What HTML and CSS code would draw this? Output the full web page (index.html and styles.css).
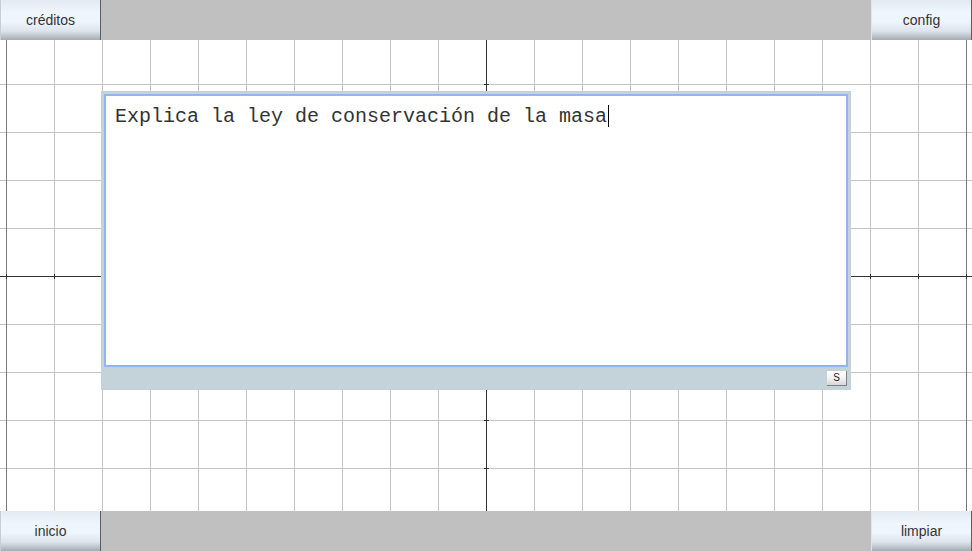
FILE: index.html
```html
<!DOCTYPE html>
<html lang="es">
<head>
<meta charset="utf-8">
<title>Pizarra</title>
<link rel="stylesheet" href="styles.css">
</head>
<body>
<div class="app">
  <header class="bar">
    <button class="btn">créditos</button>
    <div class="fill"></div>
    <button class="btn btn-right">config</button>
  </header>
  <main class="stage">
    <div class="panel">
      <div class="editor">Explica la ley de conservación de la masa<span class="caret"></span></div>
      <div class="panel-foot"><button class="mini">S</button></div>
    </div>
  </main>
  <footer class="bar">
    <button class="btn">inicio</button>
    <div class="fill"></div>
    <button class="btn btn-right">limpiar</button>
  </footer>
</div>
</body>
</html>
```
FILE: styles.css
```css
* { box-sizing: border-box; }
html, body { margin: 0; padding: 0; }
body {
  width: 972px;
  height: 551px;
  overflow: hidden;
  font-family: "Liberation Sans", Arial, sans-serif;
}
.app {
  width: 972px;
  height: 551px;
  display: flex;
  flex-direction: column;
  background-color: #fff;
  background-image:
    linear-gradient(to right, #333 1px, transparent 1px),
    linear-gradient(#333 1px, transparent 1px),
    linear-gradient(#333, #333),
    linear-gradient(#333, #333),
    linear-gradient(#7a7a7a, #7a7a7a),
    linear-gradient(#7a7a7a, #7a7a7a),
    linear-gradient(to right, #c4c4c4 1px, transparent 1px),
    linear-gradient(#c4c4c4 1px, transparent 1px);
  background-size:
    48px 5px,
    5px 48px,
    1px 100%,
    100% 1px,
    1px 100%,
    1px 100%,
    48px 100%,
    100% 48px;
  background-position:
    6px 274px,
    484px 36px,
    486px 0,
    0 276px,
    6px 0,
    966px 0,
    6px 0,
    0 36px;
  background-repeat:
    repeat-x,
    repeat-y,
    no-repeat,
    no-repeat,
    no-repeat,
    no-repeat,
    repeat,
    repeat;
}
.bar {
  height: 40px;
  display: flex;
  flex: 0 0 40px;
}
.fill {
  flex: 1;
  background: #c0c0c0;
}
.btn {
  width: 101px;
  height: 40px;
  margin: 0;
  padding: 0;
  border: 0;
  border-left: 1px solid #c9ced4;
  border-right: 1px solid #5a5e63;
  background: linear-gradient(#e4eaf0 0%, #eef5fc 30%, #eef5fc 55%, #dce3ea 78%, #a6abb2 100%);
  font-family: "Liberation Sans", Arial, sans-serif;
  font-size: 14px;
  color: #333;
  text-align: center;
}
.btn-right {
  width: 101px;
  border-left: 1px solid #dfe4e9;
  border-right: 1px solid #5a5e63;
}
.stage {
  flex: 1;
  padding: 51px 0 0 101px;
}
.panel {
  width: 750px;
  height: 299px;
  padding: 3px 3px 0 3px;
  background: #c4d3da;
  display: flex;
  flex-direction: column;
}
.editor {
  height: 273px;
  border: 2px solid #93b5ee;
  background: #fff;
  padding: 9px 9px;
  font-family: "Liberation Mono", "Courier New", monospace;
  font-size: 20px;
  line-height: 23px;
  color: #333;
  white-space: pre;
}
.caret {
  display: inline-block;
  width: 1px;
  height: 22px;
  background: #000;
  vertical-align: -5px;
  margin-left: 1px;
}
.panel-foot {
  flex: 1;
  display: flex;
  justify-content: flex-end;
  align-items: flex-start;
  padding: 4px 1px 0 0;
}
.mini {
  width: 20px;
  height: 15px;
  margin: 0;
  padding: 0;
  border: 0;
  border-right: 1px solid #7d8185;
  border-bottom: 1px solid #7d8185;
  background: linear-gradient(#ffffff 0%, #f4f4f4 50%, #d6d6d6 100%);
  font-family: "Liberation Sans", Arial, sans-serif;
  font-size: 10px;
  line-height: 14px;
  color: #222;
}
```
